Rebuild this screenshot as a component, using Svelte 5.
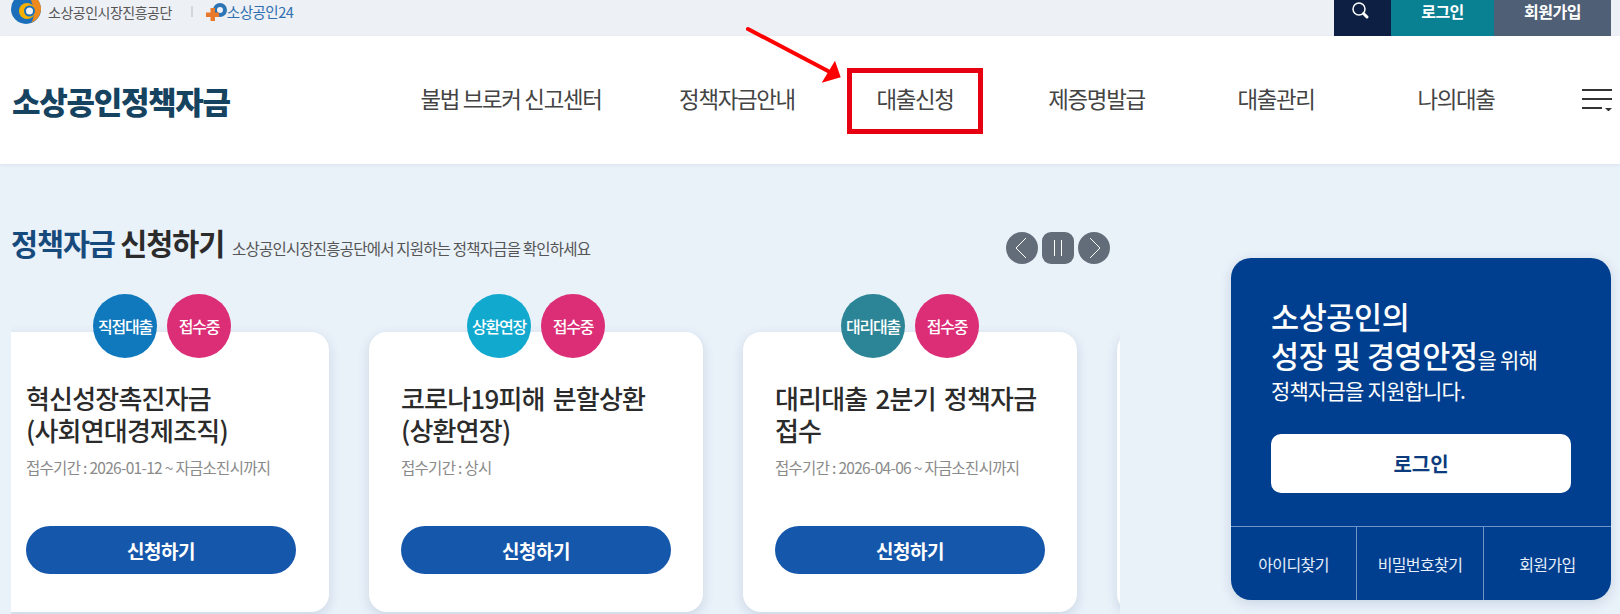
<script>
  const nav = [
    { label: '불법 브로커 신고센터', width: 254 },
    { label: '정책자금안내', width: 198 },
    { label: '대출신청', width: 136, boxed: true },
    { label: '제증명발급', width: 227 },
    { label: '대출관리', width: 132 },
    { label: '나의대출', width: 228 },
  ]

  const cards = [
    { type: '직접대출', tone: 'direct', title: ['혁신성장촉진자금', '(사회연대경제조직)'], period: '접수기간 : 2026-01-12 ~ 자금소진시까지' },
    { type: '상환연장', tone: 'extend', title: ['코로나19피해 분할상환', '(상환연장)'], period: '접수기간 : 상시' },
    { type: '대리대출', tone: 'agent', title: ['대리대출 2분기 정책자금', '접수'], period: '접수기간 : 2026-04-06 ~ 자금소진시까지' },
  ]
</script>

<div class="page">
  <div class="util">
    <div class="orgs">
      <svg class="org-mark" width="30" height="25" viewBox="0 0 30 25">
        <circle cx="15" cy="9" r="15" fill="#1b6fba" />
        <path d="M17 -6A15 15 0 0 1 20 23C24 18 24 6 17 -6z" fill="#ee8a1d" />
        <circle cx="16" cy="11" r="8" fill="#f5b000" />
        <circle cx="18.500" cy="11" r="5.500" fill="#1b6fba" />
        <circle cx="18.500" cy="11" r="3.500" fill="#edf0f5" />
      </svg>
      <span class="org-name">소상공인시장진흥공단</span>
      <i class="org-sep"></i>
      <svg class="p-mark" width="21" height="18" viewBox="0 0 21 18">
        <circle cx="14" cy="7" r="5" fill="none" stroke="#2d74b5" stroke-width="4" />
        <path d="M4.500 5h4.500v4.500h4V14H9v4H4.500v-4H0V9.500h4.500z" fill="#e8792b" />
      </svg>
      <span class="org-24">소상공인24</span>
    </div>
    <div class="util-btns">
      <button class="search" aria-label="검색">
        <svg width="20" height="20" viewBox="0 0 20 20" fill="none" stroke="#fff">
          <circle cx="9" cy="9" r="6" stroke-width="1.500" />
          <path d="M13.500 13.500 17 17" stroke-width="3" stroke-linecap="round" />
        </svg>
      </button>
      <button class="login">로그인</button>
      <button class="join">회원가입</button>
    </div>
  </div>

  <header class="head">
    <h1>소상공인정책자금</h1>
    <nav>
      {#each nav as item}
        <a href="#top" class:boxed={item.boxed} style="width: {item.width}px">{item.label}</a>
      {/each}
    </nav>
    <svg class="menu" width="30" height="22" viewBox="0 0 30 22" fill="#333">
      <rect y="0" width="30" height="2" />
      <rect y="9" width="30" height="2" />
      <rect y="18" width="20" height="2" />
      <path d="M23 19h7l-3.500 3.500z" />
    </svg>
    <svg class="arrow" width="100" height="60" viewBox="0 0 100 60">
      <path d="M3 4 83 46" stroke="#f00" stroke-width="4" stroke-linecap="round" />
      <path d="M90 35.700 95.700 52.300 76.700 57.700z" fill="#f00" />
    </svg>
  </header>

  <main>
    <section class="policy">
      <div class="title-row">
        <h2><em>정책자금</em> 신청하기</h2>
        <p>소상공인시장진흥공단에서 지원하는 정책자금을 확인하세요</p>
        <div class="controls">
          <button class="ctl" aria-label="이전">
            <svg width="32" height="32" viewBox="0 0 32 32" fill="none" stroke="#fff"><path d="M20 6 10 16l10 10" /></svg>
          </button>
          <button class="ctl pause" aria-label="정지">
            <svg width="32" height="32" viewBox="0 0 32 32" fill="none" stroke="#fff"><path d="M12.500 8v16M19.500 8v16" /></svg>
          </button>
          <button class="ctl" aria-label="다음">
            <svg width="32" height="32" viewBox="0 0 32 32" fill="none" stroke="#fff"><path d="m12 6 10 10-10 10" /></svg>
          </button>
        </div>
      </div>

      <div class="slider">
        {#each cards as card}
          <article class="card">
            <div class="badges">
              <span class="badge {card.tone}">{card.type}</span>
              <span class="badge open">접수중</span>
            </div>
            <h3>{card.title[0]}<br />{card.title[1]}</h3>
            <p class="period">{card.period}</p>
            <button class="apply">신청하기</button>
          </article>
        {/each}
        <article class="card"></article>
      </div>
    </section>

    <aside class="panel">
      <div class="panel-top">
        <p class="lead"><strong>소상공인의<br />성장 및 경영안정</strong>을 위해<br />정책자금을 지원합니다.</p>
        <button class="panel-login">로그인</button>
      </div>
      <div class="panel-links">
        <a href="#top">아이디찾기</a>
        <a href="#top">비밀번호찾기</a>
        <a href="#top">회원가입</a>
      </div>
    </aside>
  </main>
</div>

<style>
  :global(body) {
    margin: 0;
    background: #e9f1f9;
  }

  .page {
    width: 1620px;
    height: 614px;
    overflow: hidden;
    font-family: "Noto Sans CJK KR", "Noto Sans", sans-serif;
    color: #333;
  }

  button {
    border: 0;
    padding: 0;
    font: inherit;
    cursor: pointer;
  }

  .util {
    height: 36px;
    display: flex;
    justify-content: space-between;
    background: #edf0f5;
    padding: 0 9px 0 11px;
  }

  .orgs {
    display: flex;
    align-items: flex-start;
    line-height: 24px;
  }

  .org-name {
    margin-left: 7px;
    font-size: 14px;
    letter-spacing: -0.5px;
    color: #555;
  }

  .org-sep {
    width: 2px;
    height: 11px;
    margin: 6px 13px 0 19px;
    background: #d3d6da;
  }

  .p-mark {
    margin-top: 3px;
  }

  .org-24 {
    font-size: 14.500px;
    letter-spacing: -0.5px;
    color: #2d6fb0;
  }

  .util-btns {
    display: flex;
  }

  .util-btns button {
    height: 36px;
    color: #fff;
    font-size: 16px;
    font-weight: 700;
    letter-spacing: -0.5px;
    padding-bottom: 14px;
    line-height: 22px;
  }

  .util-btns .search {
    width: 57px;
    background: #0d1f43;
    padding-bottom: 12px;
  }

  .search svg {
    margin-right: 5px;
  }

  .util-btns .login {
    width: 103px;
    background: #0a8093;
  }

  .util-btns .join {
    width: 117px;
    background: #4f6076;
  }

  .head {
    position: relative;
    height: 128px;
    display: flex;
    align-items: center;
    background: #fff;
    box-shadow: 0 1px 3px rgba(60, 80, 110, 0.08);
    padding-left: 12px;
  }

  h1 {
    margin: 0;
    width: 372px;
    font-size: 31px;
    font-weight: 900;
    letter-spacing: -1.3px;
    color: #154360;
  }

  nav {
    display: flex;
    align-items: center;
  }

  nav a {
    box-sizing: border-box;
    padding-bottom: 4px;
    text-align: center;
    font-size: 22.400px;
    letter-spacing: -1.3px;
    color: #444;
    text-decoration: none;
  }

  nav a.boxed {
    height: 66px;
    padding-bottom: 0;
    line-height: 50px;
    margin: 2px 0 0 11px;
    border: 5px solid #e60012;
  }

  .menu {
    position: absolute;
    left: 1582px;
    top: 53px;
  }

  .arrow {
    position: absolute;
    left: 745px;
    top: -11px;
  }

  main {
    display: flex;
    padding-left: 11px;
  }

  .policy {
    width: 1109px;
    padding-top: 56px;
  }

  .title-row {
    display: flex;
    align-items: center;
    height: 44px;
    padding-right: 10px;
  }

  h2 {
    margin: 0;
    font-size: 29.400px;
    font-weight: 700;
    letter-spacing: -1.1px;
    color: #2b2b2b;
  }

  h2 em {
    font-style: normal;
    color: #174a7c;
  }

  .title-row p {
    margin: 12px 0 0 8px;
    font-size: 15.500px;
    letter-spacing: -0.8px;
    color: #555;
  }

  .controls {
    display: flex;
    gap: 4px;
    margin-left: auto;
    margin-top: 11px;
  }

  .ctl {
    width: 32px;
    height: 32px;
    border-radius: 50%;
    background: #626d79;
    display: flex;
  }

  .ctl.pause {
    border-radius: 9px;
  }

  .slider {
    display: flex;
    gap: 40px;
    margin-top: 30px;
    margin-left: -5px;
    padding-left: 5px;
    padding-bottom: 8px;
    overflow: hidden;
    clip-path: inset(0 0 0 5px);
  }

  .card {
    position: relative;
    flex: none;
    box-sizing: border-box;
    width: 334px;
    height: 280px;
    margin-top: 38px;
    padding: 50px 32px 0;
    background: #fff;
    border-radius: 18px;
    box-shadow: 0 4px 12px rgba(70, 100, 140, 0.18);
  }

  .card:first-child {
    margin-left: -16px;
    padding-left: 31px;
  }

  .badges {
    position: absolute;
    top: -38px;
    left: 0;
    right: 0;
    display: flex;
    justify-content: center;
    gap: 10px;
  }

  .badge {
    width: 64px;
    height: 64px;
    border-radius: 50%;
    display: flex;
    align-items: center;
    justify-content: center;
    color: #fff;
    font-size: 16px;
    font-weight: 500;
    letter-spacing: -1.2px;
  }

  .direct { background: #1079bd; }
  .extend { background: #12a9cf; }
  .agent { background: #2c8596; }
  .open { background: #dc2d77; }

  h3 {
    margin: 0;
    font-size: 26px;
    line-height: 32px;
    font-weight: 500;
    letter-spacing: -0.8px;
    word-spacing: 3px;
    color: #2b2b2b;
  }

  .period {
    margin: 10px 0 0;
    font-size: 15.500px;
    letter-spacing: -0.7px;
    color: #8a8a8a;
  }

  .apply {
    position: absolute;
    left: 32px;
    bottom: 38px;
    width: 270px;
    height: 48px;
    border-radius: 24px;
    background: #1557ab;
    color: #fff;
    font-size: 19px;
    font-weight: 700;
    letter-spacing: -0.5px;
  }

  .card:first-child .apply {
    left: 31px;
  }

  .panel {
    flex: none;
    width: 380px;
    height: 342px;
    margin: 94px 0 0 111px;
    display: flex;
    flex-direction: column;
    background: #003f8f;
    border-radius: 20px;
    color: #fff;
    box-shadow: 0 3px 12px rgba(70, 100, 140, 0.2);
    overflow: hidden;
  }

  .panel-top {
    flex: 1;
    padding: 39px 40px 0;
  }

  .lead {
    margin: 0;
    font-size: 21px;
    line-height: 30px;
    letter-spacing: -0.8px;
  }

  .lead strong {
    font-size: 30.500px;
    line-height: 39px;
    font-weight: 500;
    letter-spacing: -0.4px;
  }

  .panel-login {
    display: block;
    width: 300px;
    height: 59px;
    margin-top: 29px;
    border-radius: 10px;
    background: #fff;
    color: #0d3c7e;
    font-size: 20px;
    font-weight: 700;
  }

  .panel-links {
    height: 73px;
    display: grid;
    grid-template-columns: 125px 127px 128px;
    border-top: 1px solid #6d95c9;
  }

  .panel-links a {
    display: flex;
    align-items: center;
    justify-content: center;
    font-size: 16px;
    letter-spacing: -0.6px;
    color: #e6eefa;
    text-decoration: none;
  }

  .panel-links a + a {
    border-left: 1px solid #6d95c9;
  }
</style>
